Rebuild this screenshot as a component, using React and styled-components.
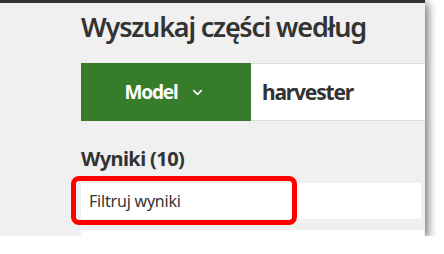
import React from 'react';
import styled, { createGlobalStyle } from 'styled-components';
import { ChevronDown } from 'lucide-react';

const Global = createGlobalStyle`
    body {
        margin: 0;
        background: #ffffff;
        font-family: "Noto Sans", "Open Sans", sans-serif;
    }
`

const App = () => {
    return (
        <>
            <Global />
            <Card>
                <Title>Wyszukaj części według</Title>
                <SearchRow>
                    <TypeButton>
                        Model
                        <ChevronDown size={15} strokeWidth={2.6} />
                    </TypeButton>
                    <SearchInput>harvester</SearchInput>
                </SearchRow>
                <Results>Wyniki (10)</Results>
                <FilterRow>
                    <FilterText>Filtruj wyniki</FilterText>
                    <Highlight />
                </FilterRow>
                <ResultRow />
            </Card>
        </>
    );
};

export default App;

const Card = styled.div`
    width: 425px;
    height: 236px;
    box-sizing: border-box;
    border-top: 3px solid #333333;
    background: #f0f0f0;
    box-shadow: 3px 3px 9px rgba(0, 0, 0, 0.55);
    padding-left: 81px;
    overflow: hidden;
`
const Title = styled.div`
    margin-top: 4px;
    height: 40px;
    line-height: 40px;
    font-size: 27px;
    font-weight: 600;
    letter-spacing: -1.2px;
    color: #333333;
`
const SearchRow = styled.div`
    margin-top: 16px;
    height: 58px;
    display: flex;
`
const TypeButton = styled.div`
    width: 170px;
    background: #367c2b;
    color: #ffffff;
    display: flex;
    align-items: center;
    justify-content: center;
    gap: 13px;
    font-size: 19px;
    font-weight: 700;
    letter-spacing: -1.2px;
    padding-right: 2px;
    box-sizing: border-box;
`
const SearchInput = styled.div`
    flex: 1;
    background: #ffffff;
    border-top: 1px solid #dcdcdc;
    border-bottom: 1px solid #dcdcdc;
    display: flex;
    align-items: center;
    padding-left: 11px;
    font-size: 21px;
    font-weight: 700;
    letter-spacing: -1.2px;
    color: #333333;
`
const Results = styled.div`
    margin-top: 25px;
    height: 26px;
    line-height: 26px;
    font-size: 20px;
    font-weight: 700;
    letter-spacing: -0.6px;
    color: #333333;
`
const FilterRow = styled.div`
    position: relative;
    margin-top: 11px;
    margin-right: 4px;
    height: 36px;
    background: #ffffff;
    display: flex;
    align-items: center;
    padding-left: 8px;
`
const FilterText = styled.span`
    font-size: 16px;
    letter-spacing: -0.2px;
    color: #333333;
`
const Highlight = styled.div`
    position: absolute;
    left: -10px;
    top: -7px;
    width: 226px;
    height: 49px;
    border: 5px solid #ff0000;
    border-radius: 8px;
    box-sizing: border-box;
`
const ResultRow = styled.div`
    margin-top: 11px;
    margin-right: 1px;
    height: 20px;
    background: #ffffff;
`
